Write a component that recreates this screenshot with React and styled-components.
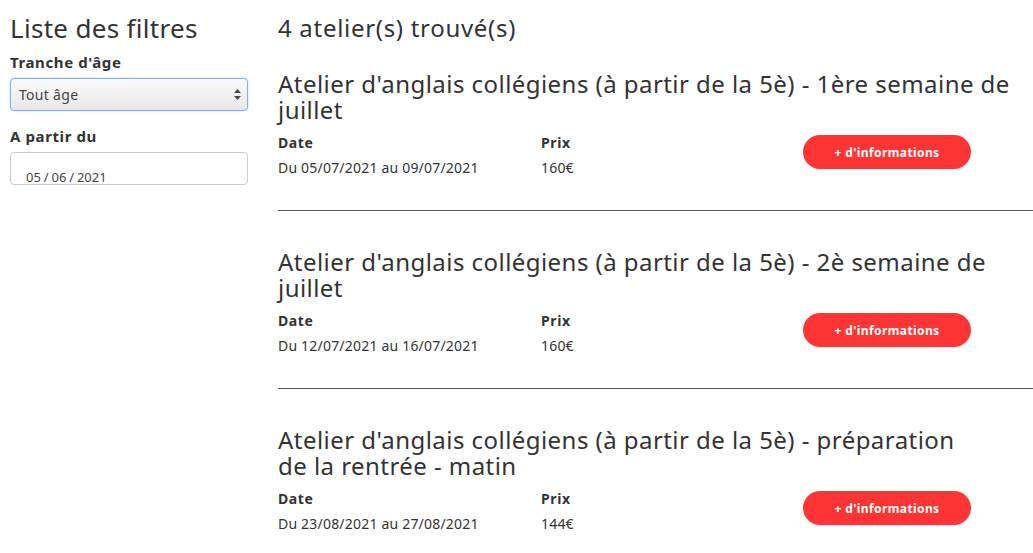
import React from 'react';
import styled, { createGlobalStyle } from 'styled-components';

// titles keep the same line breaks as the live page
const ateliers = [
  {
    title: "Atelier d'anglais collégiens (à partir de la 5è) - 1ère semaine de\njuillet",
    date: 'Du 05/07/2021 au 09/07/2021',
    price: '160€',
  },
  {
    title: "Atelier d'anglais collégiens (à partir de la 5è) - 2è semaine de\njuillet",
    date: 'Du 12/07/2021 au 16/07/2021',
    price: '160€',
  },
  {
    title: "Atelier d'anglais collégiens (à partir de la 5è) - préparation\nde la rentrée - matin",
    date: 'Du 23/08/2021 au 27/08/2021',
    price: '144€',
  },
  {
    title: "Atelier d'anglais collégiens (à partir de la 5è) - préparation\nde la rentrée - après-midi",
    date: 'Du 23/08/2021 au 27/08/2021',
    price: '144€',
  },
];

const GlobalStyle = createGlobalStyle`
  html, body {
    margin: 0;
    padding: 0;
    background: #fff;
    overflow: hidden;
  }
  body {
    font-family: "Noto Sans", "DejaVu Sans", sans-serif;
    color: #333;
  }
  * { box-sizing: border-box; }
`;

const App = () => {
  return (
    <>
      <GlobalStyle />
      <Page>
        <Sidebar>
          <SideTitle>Liste des filtres</SideTitle>
          <FieldLabel>Tranche d'âge</FieldLabel>
          <SelectBox>
            <span>Tout âge</span>
            <svg width="7" height="11" viewBox="0 0 7 11">
              <path d="M3.5 0 L7 4 L0 4 Z" fill="#444" />
              <path d="M0 7 L7 7 L3.5 11 Z" fill="#444" />
            </svg>
          </SelectBox>
          <FieldLabel>A partir du</FieldLabel>
          <DateBox>05 / 06 / 2021</DateBox>
        </Sidebar>
        <Main>
          <Count>4 atelier(s) trouvé(s)</Count>
          {ateliers.map((a, i) => (
            <Card key={i}>
              <CardTitle>{a.title}</CardTitle>
              <InfoGrid>
                <div>
                  <InfoLabel>Date</InfoLabel>
                  <InfoValue>{a.date}</InfoValue>
                </div>
                <div>
                  <InfoLabel>Prix</InfoLabel>
                  <InfoValue>{a.price}</InfoValue>
                </div>
                <div>
                  <MoreButton>+ d'informations</MoreButton>
                </div>
              </InfoGrid>
            </Card>
          ))}
        </Main>
      </Page>
    </>
  );
};

const Page = styled.div`
  display: flex;
  width: 1060px;
  padding-left: 10px;
`;

const Sidebar = styled.div`
  width: 238px;
  flex-shrink: 0;
  margin-right: 30px;
`;

const SideTitle = styled.h2`
  font-size: 26px;
  font-weight: 400;
  line-height: 30px;
  letter-spacing: 0.3px;
  margin: 13px 0 10px;
`;

const FieldLabel = styled.div`
  font-size: 15px;
  font-weight: 700;
  line-height: 18px;
  letter-spacing: 0.6px;
  margin-bottom: 7px;
`;

const SelectBox = styled.div`
  height: 33px;
  border: 1px solid #7fb2ea;
  border-radius: 4px;
  background: linear-gradient(#fafafa, #e8e8e8);
  box-shadow: 0 0 2px #a9c9f0;
  display: flex;
  align-items: center;
  justify-content: space-between;
  padding: 0 6px 0 8px;
  font-size: 14px;
  letter-spacing: 0.3px;
  color: #444;
  margin-bottom: 16px;
`;

const DateBox = styled.div`
  height: 33px;
  border: 1px solid #ccc;
  border-radius: 4px;
  padding: 15px 0 0 15px;
  font-size: 13px;
  line-height: 18px;
  word-spacing: -0.5px;
  overflow: hidden;
  color: #444;
`;

const Main = styled.div`
  flex: 1;
  min-width: 0;
`;

const Count = styled.h1`
  font-size: 24px;
  font-weight: 400;
  line-height: 30px;
  letter-spacing: 0.7px;
  margin: 13px 0 28px;
`;

const Card = styled.div`
  border-bottom: 1px solid #55556a;
  padding-bottom: 32px;
  margin-bottom: 38px;
`;

const CardTitle = styled.h3`
  font-size: 24px;
  font-weight: 400;
  line-height: 26px;
  letter-spacing: 0.45px;
  white-space: pre-line;
  margin: 0 0 10px;
`;

const InfoGrid = styled.div`
  display: grid;
  grid-template-columns: 263px 262px 1fr;
  align-items: start;
`;

const InfoLabel = styled.div`
  font-size: 14px;
  font-weight: 700;
  line-height: 20px;
  letter-spacing: 0.6px;
  margin-bottom: 5px;
`;

const InfoValue = styled.div`
  font-size: 14px;
  line-height: 20px;
  letter-spacing: 0.2px;
`;

const MoreButton = styled.button`
  width: 168px;
  height: 34px;
  margin-top: 2px;
  border: none;
  border-radius: 17px;
  background: #ff3535;
  color: #fff;
  font-family: inherit;
  font-size: 12px;
  font-weight: 700;
  letter-spacing: 0.4px;
  cursor: pointer;
`;

export default App;
